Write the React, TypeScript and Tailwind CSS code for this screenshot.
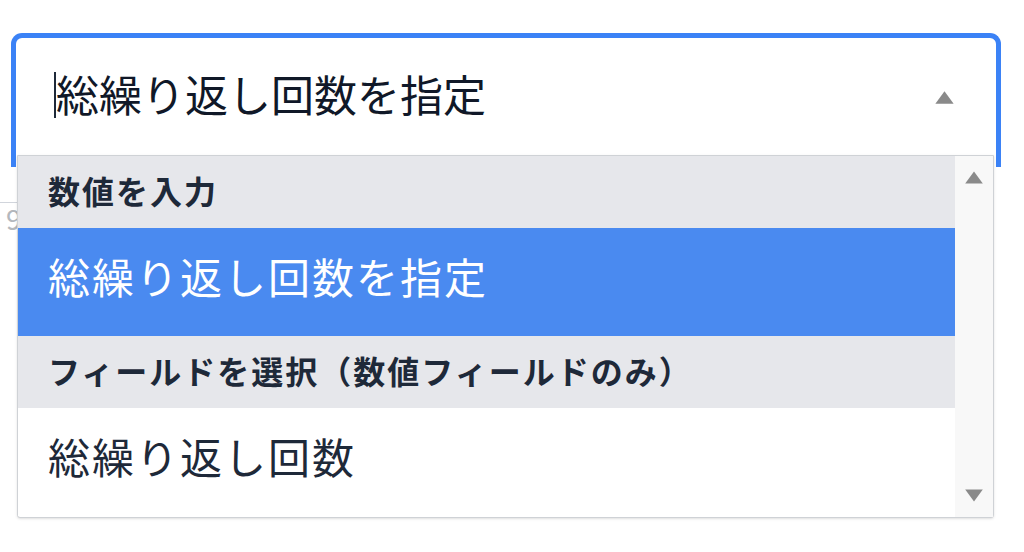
import React from 'react';

const font = { fontFamily: '"Noto Sans CJK JP", "Noto Sans", sans-serif' };

type Row = { label: string; kind: 'group' | 'option'; selected?: boolean };

const rows: Row[] = [
  { label: '数値を入力', kind: 'group' },
  { label: '総繰り返し回数を指定', kind: 'option', selected: true },
  { label: 'フィールドを選択（数値フィールドのみ）', kind: 'group' },
  { label: '総繰り返し回数', kind: 'option' },
];

const Triangle = ({ down, className }: { down?: boolean; className?: string }) => (
  <svg className={className} viewBox="0 0 20 14" fill="#8a8a8a">
    {down ? <path d="M2 2h16l-8 11z" /> : <path d="M10 1l8 11H2z" />}
  </svg>
);

export default function App() {
  return (
    <div className="relative w-[1024px] h-[552px] overflow-hidden bg-white" style={font}>
      {/* content peeking from behind the open menu */}
      <div className="absolute left-0 top-[202px] w-[24px] border-t border-gray-300">
        <span className="block pl-[6px] text-[28px] leading-[30px] text-[#b4b8bd]">9</span>
      </div>

      {/* select field */}
      <div className="ml-[11px] mt-[33px] w-[990px] h-[134px] rounded-t-[11px] border-[5px] border-b-0 border-[#3b82f6] bg-white flex items-start pt-[30px] pl-[38px] pr-[38px]">
        <span className="w-[2px] h-[46px] bg-gray-800 mt-[4px]" />
        <span className="flex-1 text-[43px] leading-[50px] text-gray-900">総繰り返し回数を指定</span>
        <Triangle className="w-[27px] h-[16px] mt-[22px]" />
      </div>

      {/* dropdown menu */}
      <div className="absolute left-[17px] top-[155px] w-[977px] h-[363px] border border-[#cfd2d6] rounded-b-[3px] bg-white flex shadow-sm">
        <div className="flex-1 flex flex-col">
          {rows.map((r, i) =>
            r.kind === 'group' ? (
              <div key={i} className="h-[72px] bg-[#e6e7eb] flex items-center pl-[30px] pb-[4px] text-[32px] tracking-[2px] font-bold text-gray-800">
                {r.label}
              </div>
            ) : (
              <div
                key={i}
                className={`h-[108px] flex items-center pl-[30px] pb-[14px] text-[42px] tracking-[2px] ${r.selected ? 'bg-[#4a8af0] text-white' : 'bg-white text-gray-800'}`}
              >
                {r.label}
              </div>
            )
          )}
        </div>
        <div className="w-[38px] bg-[#f8f8f8] flex flex-col items-center justify-between py-[14px]">
          <Triangle className="w-[22px] h-[16px]" />
          <Triangle down className="w-[22px] h-[16px]" />
        </div>
      </div>
    </div>
  );
}
